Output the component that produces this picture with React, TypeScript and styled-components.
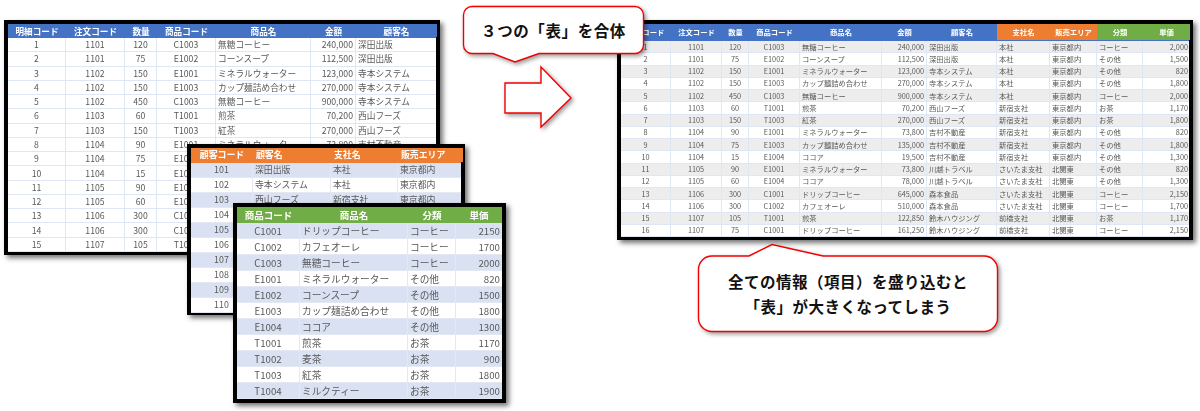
import styled, { createGlobalStyle } from 'styled-components';

const GlobalStyle = createGlobalStyle`
  html, body {
    margin: 0;
    padding: 0;
    background: #fff;
  }
`;

type Tone = 'blue' | 'orange' | 'green';
type Align = 'left' | 'center' | 'right';
type Column = { width: number; title: string; align: Align; headAlign?: Align; tone?: Tone };

const toneColors: Record<Tone, string> = {
  blue: '#4472c4',
  orange: '#ed7d31',
  green: '#70ad47',
};

const justify: Record<Align, string> = {
  left: 'flex-start',
  center: 'center',
  right: 'flex-end',
};

const Slide = styled.div`
  position: relative;
  width: 1200px;
  height: 411px;
  overflow: hidden;
  background: #fff;
  font-family: "Noto Sans CJK JP", "Noto Sans", sans-serif;
`;

// pasted pictures of spreadsheets, free on the slide
const Sheet = styled.div`
  position: absolute;
  box-sizing: border-box;
  border: 4px solid #000;
  background: #fff;
  box-shadow: 3px 3px 5px rgba(0, 0, 0, 0.55);
  filter: blur(0.3px);
`;

const OrderSheet = styled(Sheet)`
  left: 4px;
  top: 20px;
  width: 436px;
  height: 235px;
`;

const CustomerSheet = styled(Sheet)`
  left: 187px;
  top: 144px;
  width: 278px;
  height: 171px;
`;

const ProductSheet = styled(Sheet)`
  left: 233px;
  top: 203px;
  width: 273px;
  height: 200px;
`;

const MergedSheet = styled(Sheet)`
  left: 617px;
  top: 20px;
  width: 576px;
  height: 220px;
`;

const Row = styled.div<{ $columns: string; $height: number; $fill?: string; $line: string }>`
  display: grid;
  grid-template-columns: ${p => p.$columns};
  height: ${p => p.$height}px;
  box-sizing: border-box;
  background: ${p => p.$fill ?? '#fff'};
  border-bottom: 1px solid ${p => p.$line};
`;

const HeadCell = styled.div<{ $tone: Tone; $align: Align; $size: number }>`
  display: flex;
  align-items: center;
  justify-content: ${p => justify[p.$align]};
  padding: 0 3px;
  overflow: hidden;
  white-space: nowrap;
  background: ${p => toneColors[p.$tone]};
  color: #fff;
  font-size: ${p => p.$size}px;
  font-weight: 700;
`;

const Cell = styled.div<{ $align: Align; $size: number; $line: string }>`
  display: flex;
  align-items: center;
  justify-content: ${p => justify[p.$align]};
  padding: 0 2px;
  overflow: hidden;
  white-space: nowrap;
  border-right: 1px solid ${p => p.$line};
  color: #595959;
  font-size: ${p => p.$size}px;

  &:last-child {
    border-right: 0;
  }
`;

type GridProps = {
  columns: Column[];
  rows: string[][];
  headHeight: number;
  rowHeight: number;
  headSize: number;
  size: number;
  line: string;
  stripe?: string;
};

function SheetGrid({ columns, rows, headHeight, rowHeight, headSize, size, line, stripe }: GridProps) {
  const template = columns.map(c => `${c.width}px`).join(' ');
  return (
    <>
      <Row $columns={template} $height={headHeight} $line="transparent" $fill={toneColors[columns[0].tone ?? 'blue']}>
        {columns.map(c => (
          <HeadCell key={c.title} $tone={c.tone ?? 'blue'} $align={c.headAlign ?? 'center'} $size={headSize}>
            {c.title}
          </HeadCell>
        ))}
      </Row>
      {rows.map((row, i) => (
        <Row key={i} $columns={template} $height={rowHeight} $line={line} $fill={i % 2 === 0 ? stripe : undefined}>
          {columns.map((c, j) => (
            <Cell key={j} $align={c.align} $size={size} $line={line}>{row[j]}</Cell>
          ))}
        </Row>
      ))}
    </>
  );
}

const mergedRows = [
  ['1', '1101', '120', 'C1003', '無糖コーヒー', '240,000', '深田出版', '本社', '東京都内', 'コーヒー', '2,000'],
  ['2', '1101', '75', 'E1002', 'コーンスープ', '112,500', '深田出版', '本社', '東京都内', 'その他', '1,500'],
  ['3', '1102', '150', 'E1001', 'ミネラルウォーター', '123,000', '寺本システム', '本社', '東京都内', 'その他', '820'],
  ['4', '1102', '150', 'E1003', 'カップ麺詰め合わせ', '270,000', '寺本システム', '本社', '東京都内', 'その他', '1,800'],
  ['5', '1102', '450', 'C1003', '無糖コーヒー', '900,000', '寺本システム', '本社', '東京都内', 'コーヒー', '2,000'],
  ['6', '1103', '60', 'T1001', '煎茶', '70,200', '西山フーズ', '新宿支社', '東京都内', 'お茶', '1,170'],
  ['7', '1103', '150', 'T1003', '紅茶', '270,000', '西山フーズ', '新宿支社', '東京都内', 'お茶', '1,800'],
  ['8', '1104', '90', 'E1001', 'ミネラルウォーター', '73,800', '吉村不動産', '新宿支社', '東京都内', 'その他', '820'],
  ['9', '1104', '75', 'E1003', 'カップ麺詰め合わせ', '135,000', '吉村不動産', '新宿支社', '東京都内', 'その他', '1,800'],
  ['10', '1104', '15', 'E1004', 'ココア', '19,500', '吉村不動産', '新宿支社', '東京都内', 'その他', '1,300'],
  ['11', '1105', '90', 'E1001', 'ミネラルウォーター', '73,800', '川越トラベル', 'さいたま支社', '北関東', 'その他', '820'],
  ['12', '1105', '60', 'E1004', 'ココア', '78,000', '川越トラベル', 'さいたま支社', '北関東', 'その他', '1,300'],
  ['13', '1106', '300', 'C1001', 'ドリップコーヒー', '645,000', '森本食品', 'さいたま支社', '北関東', 'コーヒー', '2,150'],
  ['14', '1106', '300', 'C1002', 'カフェオーレ', '510,000', '森本食品', 'さいたま支社', '北関東', 'コーヒー', '1,700'],
  ['15', '1107', '105', 'T1001', '煎茶', '122,850', '鈴木ハウジング', '前橋支社', '北関東', 'お茶', '1,170'],
  ['16', '1107', '75', 'C1001', 'ドリップコーヒー', '161,250', '鈴木ハウジング', '前橋支社', '北関東', 'コーヒー', '2,150'],
];

const orderColumns: Column[] = [
  { width: 58, title: '明細コード', align: 'center' },
  { width: 59, title: '注文コード', align: 'center' },
  { width: 32, title: '数量', align: 'center' },
  { width: 59, title: '商品コード', align: 'center' },
  { width: 95, title: '商品名', align: 'left' },
  { width: 45, title: '金額', align: 'right' },
  { width: 81, title: '顧客名', align: 'left' },
];

const mergedColumns: Column[] = [
  { width: 50, title: '明細コード', align: 'center' },
  { width: 51, title: '注文コード', align: 'center' },
  { width: 27, title: '数量', align: 'center' },
  { width: 51, title: '商品コード', align: 'center' },
  { width: 82, title: '商品名', align: 'left' },
  { width: 45, title: '金額', align: 'right' },
  { width: 70, title: '顧客名', align: 'left' },
  { width: 53, title: '支社名', align: 'left', tone: 'orange' },
  { width: 47, title: '販売エリア', align: 'left', tone: 'orange' },
  { width: 46, title: '分類', align: 'left', tone: 'green' },
  { width: 47, title: '単価', align: 'right', tone: 'green' },
];

const customerColumns: Column[] = [
  { width: 62, title: '顧客コード', align: 'center', tone: 'orange' },
  { width: 78, title: '顧客名', align: 'left', headAlign: 'left', tone: 'orange' },
  { width: 67, title: '支社名', align: 'left', headAlign: 'left', tone: 'orange' },
  { width: 65, title: '販売エリア', align: 'left', headAlign: 'left', tone: 'orange' },
];

const customerRows = [
  ['101', '深田出版', '本社', '東京都内'],
  ['102', '寺本システム', '本社', '東京都内'],
  ['103', '西山フーズ', '新宿支社', '東京都内'],
  ['104', '吉村不動産', '新宿支社', '東京都内'],
  ['105', '川越トラベル', 'さいたま支社', '北関東'],
  ['106', '森本食品', 'さいたま支社', '北関東'],
  ['107', '鈴木ハウジング', '前橋支社', '北関東'],
  ['108', '', '', ''],
  ['109', '', '', ''],
  ['110', '', '', ''],
];

const productColumns: Column[] = [
  { width: 63, title: '商品コード', align: 'center', tone: 'green' },
  { width: 108, title: '商品名', align: 'left', tone: 'green' },
  { width: 48, title: '分類', align: 'left', tone: 'green' },
  { width: 46, title: '単価', align: 'right', tone: 'green' },
];

const productRows = [
  ['C1001', 'ドリップコーヒー', 'コーヒー', '2150'],
  ['C1002', 'カフェオーレ', 'コーヒー', '1700'],
  ['C1003', '無糖コーヒー', 'コーヒー', '2000'],
  ['E1001', 'ミネラルウォーター', 'その他', '820'],
  ['E1002', 'コーンスープ', 'その他', '1500'],
  ['E1003', 'カップ麺詰め合わせ', 'その他', '1800'],
  ['E1004', 'ココア', 'その他', '1300'],
  ['T1001', '煎茶', 'お茶', '1170'],
  ['T1002', '麦茶', 'お茶', '900'],
  ['T1003', '紅茶', 'お茶', '1800'],
  ['T1004', 'ミルクティー', 'お茶', '1900'],
];

// speech bubbles and the arrow sit on top of the sheets
const Bubble = styled.div`
  position: absolute;
  display: flex;
  flex-direction: column;
  align-items: center;
  color: #111;
  font-size: 15.5px;
  font-weight: 700;

  svg {
    position: absolute;
    left: 0;
    top: 0;
    overflow: visible;
    filter: drop-shadow(2px 2px 2px rgba(0, 0, 0, 0.4));
  }

  span {
    position: relative;
    white-space: nowrap;
  }
`;

const TopBubble = styled(Bubble)`
  left: 463px;
  top: 6px;
  width: 181px;
  height: 56px;
  padding-top: 13px;
  box-sizing: border-box;
  letter-spacing: 0.6px;
  line-height: 22px;
`;

const BottomBubble = styled(Bubble)`
  left: 698px;
  top: 244px;
  width: 300px;
  height: 88px;
  padding-top: 25px;
  box-sizing: border-box;
  line-height: 25px;
  letter-spacing: 0.5px;
`;

const MergeArrow = styled.svg`
  position: absolute;
  left: 503px;
  top: 65px;
  overflow: visible;
  filter: drop-shadow(2px 2px 2px rgba(0, 0, 0, 0.4));
`;

export default function App() {
  return (
    <Slide>
      <GlobalStyle />
      <OrderSheet>
        <SheetGrid
          columns={orderColumns}
          rows={mergedRows.slice(0, 15).map(r => r.slice(0, 7))}
          headHeight={14}
          rowHeight={14.27}
          headSize={8.6}
          size={8.7}
          line="#dfe6f4"
        />
      </OrderSheet>
      <CustomerSheet>
        <SheetGrid
          columns={customerColumns}
          rows={customerRows}
          headHeight={14.5}
          rowHeight={15}
          headSize={8.9}
          size={8.9}
          line="#e3e8f3"
          stripe="#d9e1f2"
        />
      </CustomerSheet>
      <ProductSheet>
        <SheetGrid
          columns={productColumns}
          rows={productRows}
          headHeight={16}
          rowHeight={16}
          headSize={9.5}
          size={9.7}
          line="#e3e8f3"
          stripe="#d9e1f2"
        />
      </ProductSheet>
      <MergedSheet>
        <SheetGrid
          columns={mergedColumns}
          rows={mergedRows}
          headHeight={17}
          rowHeight={12.25}
          headSize={7.3}
          size={7.3}
          line="#dfe6f4"
          stripe="#ededed"
        />
      </MergedSheet>

      <TopBubble>
        <svg width="181" height="56" viewBox="0 0 181 56">
          <path
            d="M9 0.5H172a8.5 8.5 0 0 1 8.5 8.5V39a8.5 8.5 0 0 1 -8.5 8.5H76L52 56L30 47.5H9a8.5 8.5 0 0 1 -8.5 -8.5V9a8.5 8.5 0 0 1 8.5 -8.5Z"
            fill="#fff"
            stroke="#f00000"
            strokeWidth="1.4"
          />
        </svg>
        <span>３つの「表」を合体</span>
      </TopBubble>

      <MergeArrow width="70" height="64" viewBox="0 0 70 64">
        <path d="M2 18H38V2L68 33L38 62V48H2Z" fill="#fff" stroke="#f00000" strokeWidth="1.4" />
      </MergeArrow>

      <BottomBubble>
        <svg width="300" height="88" viewBox="0 0 300 88">
          <path
            d="M14 12H51L74 0.5L125 12H286a13.5 13.5 0 0 1 13.5 13.5V74a13.5 13.5 0 0 1 -13.5 13.5H14a13.5 13.5 0 0 1 -13.5 -13.5V25.5A13.5 13.5 0 0 1 14 12Z"
            fill="#fff"
            stroke="#f00000"
            strokeWidth="1.4"
          />
        </svg>
        <span>全ての情報（項目）を盛り込むと</span>
        <span>「表」が大きくなってしまう</span>
      </BottomBubble>
    </Slide>
  );
}
